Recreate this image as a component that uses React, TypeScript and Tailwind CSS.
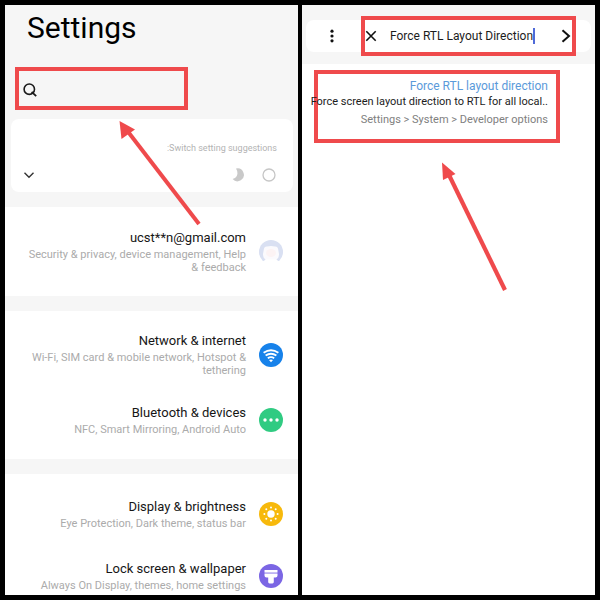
import React from 'react'

interface SettingRowProps {
  title: string
  description: string
  icon: React.ReactNode
}

const SettingRow: React.FC<SettingRowProps> = ({ title, description, icon }) => {
  return (
    <a href="#" className="flex items-center justify-end gap-[13px] pl-4 pr-[15px] text-right">
      <div className="flex flex-col gap-px">
        <h2 className="text-[13px] leading-[18px] text-[#161616]">{title}</h2>
        <p className="text-[11px] leading-[13px] text-[#ababab]">{description}</p>
      </div>
      {icon}
    </a>
  )
}

const SearchIcon = () => (
  <svg viewBox="0 0 14 14" className="size-[14px] shrink-0" fill="none" stroke="#1a1a1a">
    <circle cx="6.3" cy="6.2" r="5.2" strokeWidth="1.6" />
    <path d="M8.6 9 L10 10.2 L13.2 13.2" strokeWidth="1.8" />
  </svg>
)

const AvatarIcon = () => (
  <svg viewBox="0 0 24 24" className="size-6 shrink-0">
    <circle cx="12" cy="12" r="12" fill="#d9e0f2" />
    <path d="M5 8.5 Q5.5 6.2 8 6.4 Q12 5.4 16 6.4 Q18.5 6.2 19 8.5 L20 14 Q20 18 17.5 19.5 L20 24 L4 24 L6.5 19.5 Q4 18 4 14 Z" fill="#fbfafd" />
    <ellipse cx="12" cy="13" rx="5" ry="4" fill="#fcf3f4" />
    <path d="M2 22.5 L7 19.5 L17 19.5 L22 22.5 L22 24 L2 24 Z" fill="#ffffff" />
  </svg>
)

const WifiIcon = () => (
  <svg viewBox="0 0 24 24" className="size-6 shrink-0" fill="none" stroke="#ffffff" strokeWidth="1.8">
    <circle cx="12" cy="12" r="12" fill="#1782ea" stroke="none" />
    <path d="M4.6 9.8 Q12 4.7 19.4 9.8" />
    <path d="M6.6 12.6 Q12 8.9 17.4 12.6" />
    <path d="M8.8 15.2 Q12 13 15.2 15.2" />
    <path d="M10 17 Q12 15.8 14 17 L12 19.2 Z" fill="#ffffff" stroke="none" />
  </svg>
)

const DevicesIcon = () => (
  <svg viewBox="0 0 24 24" className="size-6 shrink-0" fill="#ffffff">
    <circle cx="12" cy="12" r="12" fill="#30cb82" />
    <circle cx="6" cy="12" r="1.7" />
    <circle cx="12" cy="12" r="1.7" />
    <circle cx="18" cy="12" r="1.7" />
  </svg>
)

const BrightnessIcon = () => (
  <svg viewBox="0 0 24 24" className="size-6 shrink-0" fill="#ffffff">
    <circle cx="12" cy="12" r="12" fill="#f7b90c" />
    <circle cx="12" cy="12" r="3.7" />
    <circle cx="12" cy="5.4" r="1" />
    <circle cx="12" cy="18.6" r="1" />
    <circle cx="5.4" cy="12" r="1" />
    <circle cx="18.6" cy="12" r="1" />
    <circle cx="7.3" cy="7.3" r="1" />
    <circle cx="16.7" cy="7.3" r="1" />
    <circle cx="7.3" cy="16.7" r="1" />
    <circle cx="16.7" cy="16.7" r="1" />
  </svg>
)

const WallpaperIcon = () => (
  <svg viewBox="0 0 24 24" className="size-6 shrink-0" fill="#ffffff">
    <circle cx="12" cy="12" r="12" fill="#7b66e4" />
    <path d="M5.5 6 H18.5 V8.6 H5.5 Z" />
    <path d="M5.5 9.6 H18.5 V11.5 Q18.5 13.6 16.5 13.6 H14.8 V18 Q14.8 19.4 13.4 19.4 H10.6 Q9.2 19.4 9.2 18 V13.6 H7.5 Q5.5 13.6 5.5 11.5 Z" />
  </svg>
)

const SettingsScreen = () => {
  return (
    <section className="relative min-w-0 flex-1 bg-white">
      <header className="bg-[#f6f6f6] pb-[15px] pt-[5px]">
        <h1 className="pl-[22px] text-[30px] leading-9 text-black">Settings</h1>
        <label className="ml-[10px] mt-[21px] flex h-[43px] w-[59%] items-center border-4 border-[#ef4a4c] pl-1 pt-0.5">
          <SearchIcon />
          <input type="text" aria-label="Search settings" className="min-w-0 flex-1 bg-transparent px-2 text-[13px] outline-none" />
        </label>
        <div className="ml-[6px] mr-[5px] mt-[9px] flex h-[73px] flex-col justify-between rounded-lg bg-white pb-[10px] pl-3 pr-4 pt-[22px]">
          <p className="text-right text-[9px] leading-[14px] text-[#b3b3b3]">:Switch setting suggestions</p>
          <div className="flex items-center">
            <button aria-label="Expand suggestions" className="mr-auto">
              <svg viewBox="0 0 12 14" className="h-[14px] w-3" fill="none" stroke="#333333" strokeWidth="1.4">
                <path d="M1.5 4.8 L6 9.2 L10.5 4.8" />
              </svg>
            </button>
            <button aria-label="Dark theme" className="mr-4">
              <svg viewBox="0 0 14 14" className="size-[14px]" fill="#c9c9c9">
                <path d="M5 0.6 A6.4 6.4 0 1 1 1.6 11 Q5.8 10 6.4 6 Q6.6 3 5 0.6 Z" />
              </svg>
            </button>
            <button aria-label="Suggestion status">
              <svg viewBox="0 0 16 14" className="h-[14px] w-4" fill="none" stroke="#c6c6c6" strokeWidth="1.3">
                <circle cx="8" cy="7" r="6" />
              </svg>
            </button>
          </div>
        </div>
      </header>
      <div className="py-[22px]">
        <SettingRow title="ucst**n@gmail.com" description="Security & privacy, device management, Help & feedback" icon={<AvatarIcon />} />
      </div>
      <div className="flex flex-col gap-[27px] border-t-[15px] border-[#f6f6f6] pb-[23px] pt-[21px]">
        <SettingRow title="Network & internet" description="Wi-Fi, SIM card & mobile network, Hotspot & tethering" icon={<WifiIcon />} />
        <SettingRow title="Bluetooth & devices" description="NFC, Smart Mirroring, Android Auto" icon={<DevicesIcon />} />
      </div>
      <div className="flex flex-col gap-[30px] border-t-[15px] border-[#f6f6f6] pb-[3px] pt-6">
        <SettingRow title="Display & brightness" description="Eye Protection, Dark theme, status bar" icon={<BrightnessIcon />} />
        <SettingRow title="Lock screen & wallpaper" description="Always On Display, themes, home settings" icon={<WallpaperIcon />} />
      </div>
      {/* arrow up to the search box */}
      <svg viewBox="0 0 82 106" className="pointer-events-none absolute left-[114px] top-[116px] h-[106px] w-[82px]" fill="#ef4a4c">
        <path d="M10 12 L80 103" stroke="#ef4a4c" strokeWidth="4" />
        <path d="M0.5 0 L16 8.5 L2.5 18 Z" />
      </svg>
    </section>
  )
}

const SearchScreen = () => {
  return (
    <section className="relative min-w-0 flex-1 bg-white">
      <header className="bg-[#f6f6f6] px-1 pb-3 pt-[15px]">
        <div className="relative flex h-8 items-center rounded-lg bg-white pl-5">
          <button aria-label="More options">
            <svg viewBox="0 0 12 14" className="h-[14px] w-3" fill="#111111">
              <circle cx="6" cy="2.2" r="1.6" />
              <circle cx="6" cy="7" r="1.6" />
              <circle cx="6" cy="11.8" r="1.6" />
            </svg>
          </button>
          <button aria-label="Clear search" className="ml-[27px]">
            <svg viewBox="0 0 12 12" className="size-3" fill="none" stroke="#111111" strokeWidth="1.6">
              <path d="M1.3 1.3 L10.7 10.7 M10.7 1.3 L1.3 10.7" />
            </svg>
          </button>
          <input type="text" aria-label="Search settings" defaultValue="Force RTL Layout Direction" className="field-sizing-content ml-[13px] bg-transparent text-[12px] leading-5 text-[#1c1c1c] outline-none" />
          <span className="h-4 w-0.5 bg-[#4f6ad8]" />
          <button aria-label="Search" className="ml-auto mr-5">
            <svg viewBox="0 0 10 14" className="h-[14px] w-[10px]" fill="none" stroke="#111111" strokeWidth="2">
              <path d="M1.5 1.2 L8 7 L1.5 12.8" />
            </svg>
          </button>
          <div className="pointer-events-none absolute -inset-y-1 left-[55px] right-[15px] border-4 border-[#ef4a4c]" />
        </div>
      </header>
      <a href="#" className="ml-3 mr-[35px] mt-[6px] flex h-[73px] flex-col items-end whitespace-nowrap border-4 border-[#ef4a4c] pr-2 pt-1">
        <h2 className="text-[12px] leading-4 text-[#5b9ada]">Force RTL layout direction</h2>
        <p className="text-[11px] leading-4 text-[#1c1c1c]">Force screen layout direction to RTL for all local..</p>
        <p className="mt-0.5 text-[11px] leading-4 text-[#808080]">Settings &gt; System &gt; Developer options</p>
      </a>
      {/* arrow up to the search result */}
      <svg viewBox="0 0 68 130" className="pointer-events-none absolute left-[139px] top-[157px] h-[130px] w-[68px]" fill="#ef4a4c">
        <path d="M8 13 L64 128" stroke="#ef4a4c" strokeWidth="4.2" />
        <path d="M1 0.5 L14.5 12 L2 18 Z" />
      </svg>
    </section>
  )
}

export default function App() {
  return (
    <main className="flex min-h-screen gap-1 bg-black p-[5px] font-['Roboto',sans-serif]">
      <SettingsScreen />
      <SearchScreen />
    </main>
  )
}
